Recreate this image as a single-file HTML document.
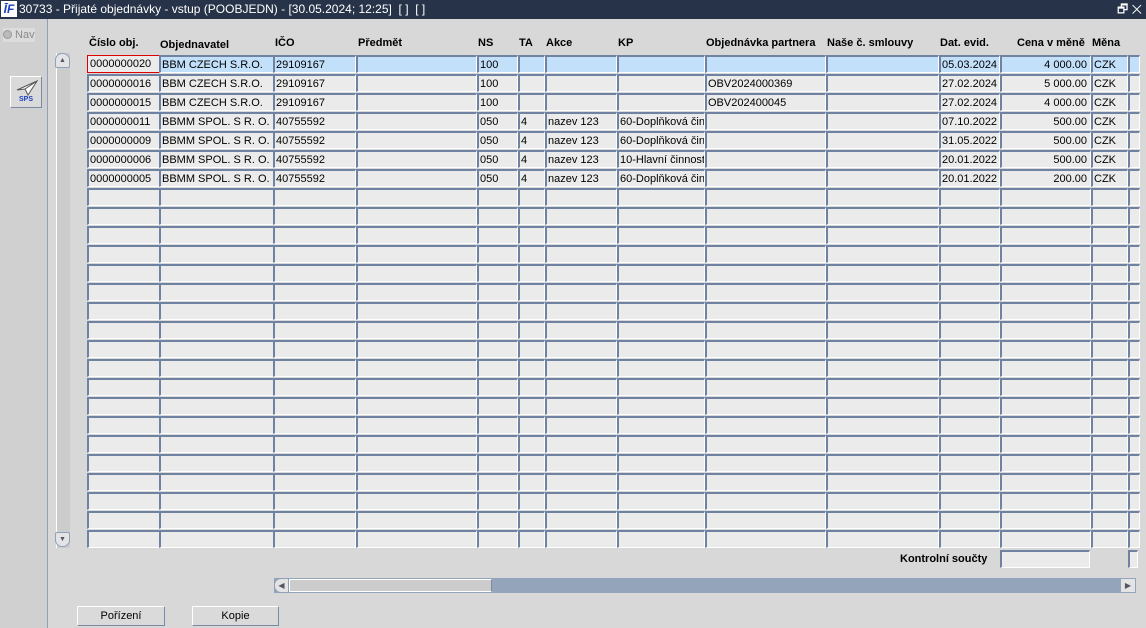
<!DOCTYPE html>
<html><head><meta charset="utf-8"><style>
*{box-sizing:border-box;margin:0;padding:0}
body{width:1146px;height:628px;overflow:hidden;background:#d8d8d8;font-family:"Liberation Sans",Arial,sans-serif;font-size:11px;color:#000;position:relative}
.t{position:absolute;left:0;top:0;width:1146px;height:19px;background:#263348;color:#fff;font-size:12px;line-height:19px}
.lp{position:absolute;left:0;top:19px;width:48px;height:609px;background:#d0d0d0;border-right:1px solid #8fa0b8}
.h{position:absolute;top:37px;font-weight:bold;font-size:11px}
.c{position:absolute;height:18px;background:#ebebeb;border-top:2px solid #6f82a2;border-left:2px solid #6f82a2;border-right:1px solid #fff;border-bottom:1px solid #fff;line-height:17px;padding-left:1px;white-space:nowrap;overflow:hidden;font-size:11px}
.s{background:#c3e0fb}
.r{text-align:right;padding-right:3px}
.btn{position:absolute;top:606px;height:20px;border:1px solid #7a8aa5;border-top-color:#fff;border-left-color:#fff;background:#dadada;text-align:center;line-height:18px;font-size:11px}
</style></head><body>
<div class="t"><span style="display:inline-block;width:16px;height:16px;background:#fff;color:#1a3fc0;font-weight:bold;font-style:italic;font-size:12px;line-height:16px;text-align:center;margin:1px 2px 0 1px;vertical-align:top">ĪF</span>30733 - Přijaté objednávky - vstup (POOBJEDN) - [30.05.2024; 12:25]&nbsp; [ ]&nbsp; [ ]<span style="position:absolute;right:4px;top:0">🗗 ✕</span></div>
<div class="lp">
<div style="position:absolute;left:3px;top:9px;width:32px;height:14px;background:#dcdcdc;color:#8a8a8a;font-size:11px;line-height:14px"><span style="display:inline-block;width:9px;height:9px;border-radius:50%;background:#bbb;border:1px solid #999;vertical-align:-1px"></span> Nav</div>
<div style="position:absolute;left:10px;top:57px;width:32px;height:32px;border:1px solid #7a8aa5;border-top-color:#fff;border-left-color:#fff;background:#dadada;font-size:7px;color:#1a3fc0;font-weight:bold;text-align:center;padding-top:19px">SPS<svg style="position:absolute;left:5px;top:3px" width="22" height="16"><path d="M1 10 L21 1 L12 15 L9 9 Z M9 9 L21 1" fill="#fff" stroke="#555"/></svg></div>
</div>
<div style="position:absolute;left:56px;top:53px;width:14px;height:495px;background:#cccccc;border-left:1px solid #fff"></div>
<div style="position:absolute;left:55px;top:53px;width:15px;height:15px;border:1px solid #8fa0b8;border-radius:7px 7px 2px 2px;background:#e4e4e4;font-size:7px;text-align:center;color:#556;line-height:13px">▲</div>
<div style="position:absolute;left:55px;top:532px;width:15px;height:15px;border:1px solid #8fa0b8;border-radius:2px 2px 7px 7px;background:#e4e4e4;font-size:7px;text-align:center;color:#556;line-height:13px">▼</div>
<div class="h" style="left:89px">Číslo obj.</div><div class="h" style="left:160px;top:39px">Objednavatel</div><div class="h" style="left:275px">IČO</div><div class="h" style="left:358px">Předmět</div><div class="h" style="left:478px">NS</div><div class="h" style="left:519px">TA</div><div class="h" style="left:546px">Akce</div><div class="h" style="left:618px">KP</div><div class="h" style="left:706px">Objednávka partnera</div><div class="h" style="left:827px">Naše č. smlouvy</div><div class="h" style="left:940px">Dat. evid.</div><div class="h" style="left:1017px">Cena v měně</div><div class="h" style="left:1092px">Měna</div>
<div id="g"></div>
<div style="position:absolute;left:900px;top:553px;font-weight:bold;font-size:11px">Kontrolní součty</div>
<div class="c" style="left:1000px;top:550px;width:90px"></div>
<div class="c" style="left:1128px;top:550px;width:10px"></div>
<div style="position:absolute;left:274px;top:578px;width:862px;height:15px;background:#94a4ba"></div>
<div style="position:absolute;left:274px;top:578px;width:15px;height:15px;background:#e4e4e4;border:1px solid #8fa0b8;border-radius:7px 0 0 7px;font-size:8px;line-height:13px;text-align:center;color:#556">◀</div>
<div style="position:absolute;left:289px;top:579px;width:203px;height:13px;background:#cccccc;border:1px solid #fff;border-right-color:#7a8aa5"></div>
<div style="position:absolute;left:1121px;top:579px;width:14px;height:13px;background:#e4e4e4;font-size:8px;line-height:13px;text-align:center;color:#556">▶</div>
<div class="btn" style="left:77px;width:88px">Pořízení</div>
<div class="btn" style="left:192px;width:87px">Kopie</div>
<script>
var cols=[[87,73],[159,115],[273,83],[356,121],[477,41],[518,27],[545,72],[617,88],[705,121],[826,113],[939,61],[1000,91],[1091,37],[1128,12]];
var d=[["0000000020","BBM CZECH S.R.O.","29109167","","100","","","","","","05.03.2024","4 000.00","CZK"],
["0000000016","BBM CZECH S.R.O.","29109167","","100","","","","OBV2024000369","","27.02.2024","5 000.00","CZK"],
["0000000015","BBM CZECH S.R.O.","29109167","","100","","","","OBV202400045","","27.02.2024","4 000.00","CZK"],
["0000000011","BBMM SPOL. S R. O.","40755592","","050","4","nazev 123","60-Doplňková čin","","","07.10.2022","500.00","CZK"],
["0000000009","BBMM SPOL. S R. O.","40755592","","050","4","nazev 123","60-Doplňková čin","","","31.05.2022","500.00","CZK"],
["0000000006","BBMM SPOL. S R. O.","40755592","","050","4","nazev 123","10-Hlavní činnost","","","20.01.2022","500.00","CZK"],
["0000000005","BBMM SPOL. S R. O.","40755592","","050","4","nazev 123","60-Doplňková čin","","","20.01.2022","200.00","CZK"]];
var h="";
for(var r=0;r<26;r++){var y=55+r*19;for(var c=0;c<cols.length;c++){var t=(d[r]&&d[r][c])||"";var cl="c"+(r==0&&c>0?" s":"")+(c==11?" r":"");var st="left:"+cols[c][0]+"px;top:"+y+"px;width:"+cols[c][1]+"px;";if(r==0&&c==0)st+="border:1px solid #e00000;background:#ebebeb;line-height:16px;padding-left:2px;";h+='<div class="'+cl+'" style="'+st+'">'+t+'</div>';}}
document.getElementById("g").innerHTML=h;
</script>
</body></html>
